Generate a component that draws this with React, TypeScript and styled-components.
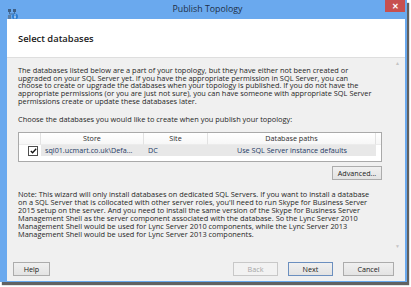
import React from 'react';
import styled, { createGlobalStyle } from 'styled-components';

const GlobalStyle = createGlobalStyle`
  html, body {
    margin: 0;
    padding: 0;
    background: #ffffff;
  }
  body {
    font-family: "Open Sans", "Liberation Sans", sans-serif;
    color: #222;
  }
`;

const Page = styled.div`
  width: 411px;
  height: 287px;
  overflow: hidden;
`;

const Window = styled.div`
  width: 407px;
  display: flex;
  flex-direction: column;
  box-shadow: 2px 3px 1px rgba(30, 30, 30, 0.7);
`;

const TitleBar = styled.div`
  height: 19px;
  background: #6aa9ee;
  display: flex;
  align-items: flex-start;
`;

const AppIcon = styled.div`
  width: 10px;
  height: 11px;
  margin: 3px 0 0 8px;
`;

const Title = styled.div`
  flex: 1;
  text-align: center;
  font-size: 8.8px;
  line-height: 19px;
  color: #1e2f45;
  padding-left: 12px;
`;

const CloseButton = styled.div`
  width: 20px;
  height: 12px;
  margin-right: 2px;
  background: #c75050;
  color: #fff;
  font-size: 8px;
  font-weight: bold;
  line-height: 12px;
  text-align: center;
`;

const Body = styled.div`
  border-left: 7px solid #6aa9ee;
  border-right: 2px solid #6aa9ee;
  border-bottom: 1px solid #6aa9ee;
  background: #f0f0f0;
  display: flex;
  flex-direction: column;
`;

const Header = styled.div`
  height: 38px;
  background: #ffffff;
  border-bottom: 1px solid #dedede;
  display: flex;
  align-items: center;
  padding-left: 11px;
  font-size: 9.4px;
  font-weight: 600;
  color: #1a1a1a;
`;

const ScrollArea = styled.div`
  height: 194px;
  display: flex;
`;

const ScrollContent = styled.div`
  flex: 1;
  padding: 9px 0 0 11px;
`;

const ScrollTrack = styled.div`
  width: 23px;
  display: flex;
  flex-direction: column;
  justify-content: space-between;
  align-items: center;
  padding: 2px 0 3px 8px;
  box-sizing: border-box;
  color: #c4c4c4;
  font-size: 5px;
`;

const Text = styled.p<{ $lh?: number }>`
  margin: 0;
  font-size: 7.4px;
  line-height: ${(p) => p.$lh ?? 7.7}px;
  color: #262626;
  white-space: nowrap;
`;

const Gap = styled.div<{ $h: number }>`
  height: ${(p) => p.$h}px;
`;

const Table = styled.div`
  width: 364px;
  height: 30px;
  box-sizing: border-box;
  background: #fff;
  border: 1px solid #a9a9a9;
  display: grid;
  grid-template-columns: 22px 103px 64px 168px 1fr;
  grid-template-rows: 12px 11px;
  align-content: start;
  font-size: 7.2px;
`;

const HeadCell = styled.div<{ $last?: boolean }>`
  border-right: ${(p) => (p.$last ? 'none' : '1px solid #e2e2e2')};
  border-bottom: 1px solid #ececec;
  text-align: center;
  line-height: 11px;
  color: #2b2b2b;
  background: linear-gradient(#ffffff, #f7f7f7);
`;

const RowCell = styled.div<{ $plain?: boolean; $center?: boolean }>`
  background: ${(p) => (p.$plain ? '#ffffff' : '#e8e8e8')};
  color: #1e3a66;
  line-height: 11px;
  padding-left: ${(p) => (p.$center ? 0 : 4)}px;
  display: flex;
  align-items: center;
  justify-content: ${(p) => (p.$center ? 'center' : 'flex-start')};
  white-space: nowrap;
  overflow: hidden;
`;

const Check = styled.div`
  width: 8px;
  height: 8px;
  border: 1px solid #4d4d4d;
  background: #fff;
  margin-left: 5px;
  display: flex;
  align-items: center;
  justify-content: center;
`;

const AdvancedRow = styled.div`
  width: 364px;
  display: flex;
  justify-content: flex-end;
  margin-top: 4px;
`;

const Button = styled.div<{ $w: number; $disabled?: boolean; $default?: boolean }>`
  width: ${(p) => p.$w}px;
  height: 14px;
  box-sizing: border-box;
  border: 1px solid ${(p) => (p.$disabled ? '#c8c8c8' : p.$default ? '#6b8fbf' : '#acacac')};
  background: ${(p) => (p.$disabled ? '#f2f2f2' : 'linear-gradient(#f0f0f0, #e3e3e3)')};
  color: ${(p) => (p.$disabled ? '#a6a6a6' : '#222')};
  font-size: 7.2px;
  line-height: 12px;
  text-align: center;
`;

const ButtonBar = styled.div`
  height: 29px;
  display: flex;
  align-items: flex-start;
  padding: 10px 11px 0 6px;
  box-sizing: border-box;
  gap: 10px;
`;

const Spacer = styled.div`
  flex: 1;
`;

const intro = [
  'The databases listed below are a part of your topology, but they have either not been created or',
  'upgraded on your SQL Server yet. If you have the appropriate permission in SQL Server, you can',
  'choose to create or upgrade the databases when your topology is published. If you do not have the',
  'appropriate permissions (or you are just not sure), you can have someone with appropriate SQL Server',
  'permissions create or update these databases later.',
];

const note = [
  'Note: This wizard will only install databases on dedicated SQL Servers. If you want to install a database',
  "on a SQL Server that is collocated with other server roles, you'll need to run Skype for Business Server",
  '2015 setup on the server. And you need to install the same version of the Skype for Business Server',
  'Management Shell as the server component associated with the database. So the Lync Server 2010',
  'Management Shell would be used for Lync Server 2010 components, while the Lync Server 2013',
  'Management Shell would be used for Lync Server 2013 components.',
];

const withBreaks = (lines: string[]) =>
  lines.map((l, i) => (
    <React.Fragment key={i}>
      {l}
      {i < lines.length - 1 && <br />}
    </React.Fragment>
  ));

const TopologyIcon = () => (
  <svg width="10" height="11" viewBox="0 0 10 11">
    <rect x="0" y="0" width="3" height="3" fill="#3d5f86" />
    <rect x="5" y="0" width="3" height="3" fill="#3d5f86" />
    <path d="M1.5 3 V5 H6.5 V3" stroke="#3d5f86" strokeWidth="0.8" fill="none" />
    <rect x="0" y="6" width="3" height="4" fill="#5a7ea6" />
    <circle cx="7" cy="7.5" r="3" fill="#2f7fd3" />
    <rect x="6.5" y="6.8" width="1" height="2.6" fill="#fff" />
    <rect x="6.5" y="5.4" width="1" height="0.9" fill="#fff" />
  </svg>
);

const App: React.FC = () => {
  return (
    <Page>
      <GlobalStyle />
      <Window>
        <TitleBar>
          <AppIcon>
            <TopologyIcon />
          </AppIcon>
          <Title>Publish Topology</Title>
          <CloseButton>✕</CloseButton>
        </TitleBar>
        <Body>
          <Header>Select databases</Header>
          <ScrollArea>
            <ScrollContent>
              <Text>{withBreaks(intro)}</Text>
              <Gap $h={10} />
              <Text>Choose the databases you would like to create when you publish your topology:</Text>
              <Gap $h={9} />
              <Table>
                <HeadCell />
                <HeadCell>Store</HeadCell>
                <HeadCell>Site</HeadCell>
                <HeadCell>Database paths</HeadCell>
                <HeadCell $last />
                <RowCell $plain>
                  <Check>
                    <svg width="7" height="6" viewBox="0 0 7 6">
                      <path d="M0.8 3 L2.6 4.8 L6.2 0.8" stroke="#111" strokeWidth="1.3" fill="none" />
                    </svg>
                  </Check>
                </RowCell>
                <RowCell>sql01.ucmart.co.uk\Defa...</RowCell>
                <RowCell>DC</RowCell>
                <RowCell $center>Use SQL Server instance defaults</RowCell>
                <RowCell $plain />
              </Table>
              <AdvancedRow>
                <Button $w={50}>Advanced...</Button>
              </AdvancedRow>
              <Gap $h={11} />
              <Text $lh={7.9}>{withBreaks(note)}</Text>
            </ScrollContent>
            <ScrollTrack>
              <span>▲</span>
              <span>▼</span>
            </ScrollTrack>
          </ScrollArea>
          <ButtonBar>
            <Button $w={37}>Help</Button>
            <Spacer />
            <Button $w={45} $disabled>Back</Button>
            <Button $w={45} $default>Next</Button>
            <Button $w={51}>Cancel</Button>
          </ButtonBar>
        </Body>
      </Window>
    </Page>
  );
};

export default App;
